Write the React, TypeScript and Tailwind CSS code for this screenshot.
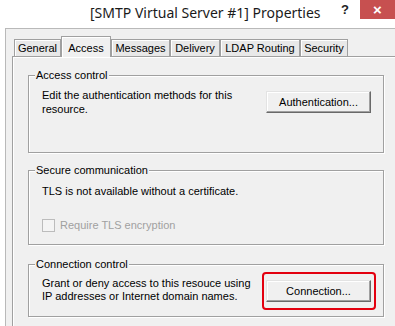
import React from 'react'

const tabs = [
  { label: 'General', width: 'w-[47px]' },
  { label: 'Access', width: 'w-[50px]', active: true },
  { label: 'Messages', width: 'w-[59px]' },
  { label: 'Delivery', width: 'w-[50px]' },
  { label: 'LDAP Routing', width: 'w-[80px]' },
  { label: 'Security', width: 'w-[48px]' },
]

function GroupBox({
  title,
  className,
  children,
}: {
  title: string
  className?: string
  children: React.ReactNode
}) {
  return (
    <div
      className={`relative border border-[#a0a0a0] shadow-[inset_1px_1px_0_#fff,1px_1px_0_#fff] ${className ?? ''}`}
    >
      <span className="absolute -top-[8px] left-[6px] bg-[#f0f0f0] px-[1px] leading-[14px]">
        {title}
      </span>
      {children}
    </div>
  )
}

function ClassicButton({ label }: { label: string }) {
  return (
    <button className="flex h-[22px] w-[105px] items-center justify-center border border-t-[#e3e3e3] border-l-[#e3e3e3] border-r-[#696969] border-b-[#696969] bg-[#f0f0f0] leading-none shadow-[inset_-1px_-1px_0_#a0a0a0,inset_1px_1px_0_#fff]">
      {label}
    </button>
  )
}

export default function App() {
  return (
    <div
      className="relative h-[326px] w-[395px] overflow-hidden bg-white text-[11px] text-black"
      style={{ fontFamily: '"Liberation Sans", Arial, sans-serif' }}
    >
      {/* title bar */}
      <div className="flex h-[28px] items-start">
        <div
          className="pt-[3px] pl-[90px] text-[14px] leading-[20px] whitespace-nowrap text-[#1a1a1a]"
          style={{ fontFamily: '"Noto Sans", "Open Sans", sans-serif' }}
        >
          [SMTP Virtual Server #1] Properties
        </div>
        <div className="ml-auto flex items-start">
          <span className="mt-[3px] mr-[11px] text-[13px] leading-[14px] font-bold text-[#222]">
            ?
          </span>
          <div className="flex h-[19px] w-[35px] items-center justify-center bg-[#c75050] text-[15px] leading-none font-bold text-white">
            ×
          </div>
        </div>
      </div>

      {/* window body */}
      <div className="ml-[5px] h-[298px] border-t border-l border-[#b9b9b9] bg-[#f0f0f0] pt-[7px] pl-[6px]">
        {/* tab strip */}
        <div className="relative z-10 flex h-[20px] items-end pl-[2px]">
          {tabs.map((t) =>
            t.active ? (
              <div
                key={t.label}
                className={`-mb-[1px] flex h-[21px] ${t.width} items-start justify-center border border-b-0 border-[#a0a0a0] bg-[#f0f0f0] pt-[3px] shadow-[inset_1px_1px_0_#fff]`}
              >
                {t.label}
              </div>
            ) : (
              <div
                key={t.label}
                className={`flex h-[17px] ${t.width} items-center justify-center border border-b-0 border-[#a0a0a0] bg-[#e8e8e8] pt-[1px] shadow-[inset_1px_1px_0_#fff]`}
              >
                {t.label}
              </div>
            ),
          )}
        </div>

        {/* tab panel */}
        <div className="h-[290px] w-[400px] border border-[#a0a0a0] bg-[#f0f0f0] pt-[18px] pl-[15px] shadow-[inset_1px_1px_0_#fff]">
          <GroupBox title="Access control" className="h-[78px] w-[356px]">
            <div className="flex justify-between pt-[12px] pr-[12px] pl-[13px]">
              <p className="w-[205px] leading-[14px]">
                Edit the authentication methods for this resource.
              </p>
              <div className="pt-[3px]">
                <ClassicButton label="Authentication..." />
              </div>
            </div>
          </GroupBox>

          <GroupBox title="Secure communication" className="mt-[17px] h-[75px] w-[356px]">
            <div className="pt-[13px] pl-[13px]">
              <p className="leading-[14px]">TLS is not available without a certificate.</p>
              <label className="mt-[19px] flex items-center gap-[5px] text-[#a0a0a0]">
                <span className="h-[13px] w-[13px] border border-[#bcbcbc] bg-[#f4f4f4]" />
                Require TLS encryption
              </label>
            </div>
          </GroupBox>

          <GroupBox title="Connection control" className="mt-[19px] h-[53px] w-[356px]">
            <div className="flex justify-between pt-[12px] pr-[12px] pl-[13px]">
              <p className="w-[215px] leading-[13px]">
                Grant or deny access to this resouce using IP addresses or Internet domain
                names.
              </p>
              <div className="pt-[3px]">
                <ClassicButton label="Connection..." />
              </div>
            </div>
          </GroupBox>
        </div>
      </div>

      {/* red annotation highlights */}
      <div className="pointer-events-none absolute top-[39px] left-[62px] h-[18px] w-[48px] rounded-[3px] border-2 border-[#e3000f]" />
      <div className="pointer-events-none absolute top-[272px] left-[262px] h-[38px] w-[114px] rounded-[4px] border-2 border-[#e3000f]" />
    </div>
  )
}
